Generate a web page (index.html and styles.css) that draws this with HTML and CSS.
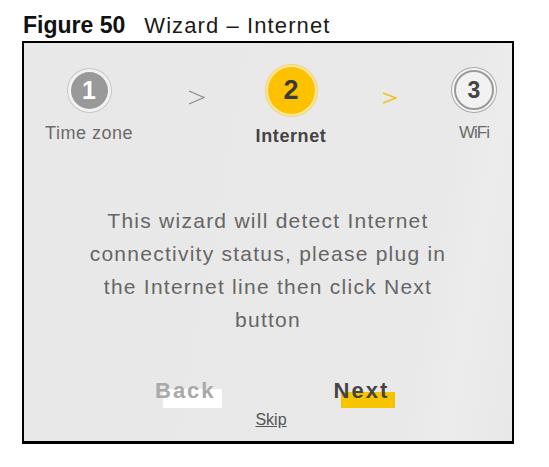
FILE: index.html
```html
<!DOCTYPE html>
<html>
<head>
<meta charset="utf-8">
<link rel="stylesheet" href="styles.css">
</head>
<body>
<div class="caption"><span class="fig">Figure 50</span><span class="cap-title">Wizard – Internet</span></div>
<div class="frame">
  <div class="steps">
    <div class="step step-1">
      <div class="dot-wrap"><div class="dot dot-done">1</div></div>
      <div class="label">Time zone</div>
    </div>
    <svg class="arrow arrow-gray" width="17" height="15" viewBox="0 0 17 15"><polyline points="1,1 16,7.5 1,14" fill="none" stroke="#8c8c8c" stroke-width="1.3"/></svg>
    <div class="step step-2">
      <div class="dot-wrap"><div class="dot dot-active">2</div></div>
      <div class="label label-active">Internet</div>
    </div>
    <svg class="arrow arrow-yellow" width="15" height="12" viewBox="0 0 15 12"><polyline points="1,1 14,6 1,11" fill="none" stroke="#f5c21b" stroke-width="1.6"/></svg>
    <div class="step step-3">
      <div class="dot-wrap"><div class="dot dot-next">3</div></div>
      <div class="label label-wifi">WiFi</div>
    </div>
  </div>
  <p class="message">This wizard will detect Internet<br>connectivity status, please plug in<br>the Internet line then click Next<br>button</p>
  <div class="buttons">
    <span class="btn btn-back">Back</span>
    <span class="btn btn-next">Next</span>
  </div>
  <div class="skip-row"><span class="skip">Skip</span></div>
</div>
</body>
</html>
```
FILE: styles.css
```css
html, body {
  margin: 0;
  padding: 0;
  background: #ffffff;
  font-family: "Liberation Sans", Arial, sans-serif;
}

.caption {
  margin-top: 12px;
  height: 26px;
  line-height: 26px;
  font-size: 22px;
  padding-left: 23px;
  color: #111;
  white-space: nowrap;
}

.fig {
  font-weight: bold;
  font-size: 23px;
}

.cap-title {
  margin-left: 19px;
  letter-spacing: 1.1px;
  color: #1a1a1a;
}

.frame {
  box-sizing: border-box;
  margin-top: 3px;
  margin-left: 22px;
  width: 492px;
  height: 403px;
  border: 2px solid #000;
  border-bottom-width: 3px;
  background: linear-gradient(100deg, #e8e8e8 0%, #e9e9e9 80%, #ececec 88%, #e8e8e8 100%);
  padding: 20px 0 0 0;
}

.steps {
  display: flex;
  align-items: flex-start;
  padding-left: 20px;
}

.step {
  display: flex;
  flex-direction: column;
  align-items: center;
}

.step-1 { width: 90px; }
.step-2 { width: 76px; margin-left: 48px; }
.step-3 { width: 48px; margin-left: 53px; }

.dot-wrap {
  height: 54px;
  display: flex;
  align-items: center;
  justify-content: center;
}

.dot {
  border-radius: 50%;
  display: flex;
  align-items: center;
  justify-content: center;
  font-weight: bold;
  box-sizing: border-box;
}

.dot-done {
  width: 37px;
  height: 37px;
  background: #999999;
  color: #ffffff;
  font-size: 25px;
  box-shadow: 0 0 0 3px #f3f3f3, 0 0 0 4px #c6c6c6;
}

.dot-active {
  width: 47px;
  height: 47px;
  background: #fcc200;
  color: #3a3a3a;
  font-size: 27px;
  box-shadow: 0 0 0 2px #fbe6a0, 0 0 0 3px #f2d470;
}

.dot-next {
  width: 40px;
  height: 40px;
  background: #f2f2f2;
  border: 2px solid #9a9a9a;
  color: #444444;
  font-size: 23px;
  box-shadow: 0 0 0 2px #f6f6f6, 0 0 0 3px #a9a9a9;
}

.label {
  margin-top: 5px;
  line-height: 22px;
  font-size: 18px;
  color: #6a6a6a;
  white-space: nowrap;
  letter-spacing: 0.5px;
}

.label-active {
  margin-top: 8px;
  font-weight: bold;
  color: #444444;
  letter-spacing: 0.6px;
}

.label-wifi {
  letter-spacing: -1px;
  font-size: 17px;
}

.arrow {
  flex: none;
  display: block;
}

.arrow-gray {
  margin-left: 54px;
  margin-top: 27px;
}

.arrow-yellow {
  margin-left: 53px;
  margin-top: 29px;
}

.message {
  margin: 57px 0 0 0;
  text-align: center;
  font-size: 21px;
  line-height: 33px;
  letter-spacing: 1.25px;
  color: #666666;
  white-space: nowrap;
}

.buttons {
  display: flex;
  margin-top: 42px;
  padding-left: 131px;
  height: 26px;
  line-height: 26px;
}

.btn {
  position: relative;
  font-size: 22px;
  font-weight: bold;
  letter-spacing: 2px;
  z-index: 0;
}

.btn::before {
  content: "";
  position: absolute;
  z-index: -1;
}

.btn-back {
  color: #a9a9a9;
}

.btn-back::before {
  left: 8px;
  top: 11px;
  width: 59px;
  height: 19px;
  background: #ffffff;
}

.btn-next {
  margin-left: 118px;
  color: #444444;
}

.btn-next::before {
  left: 7px;
  top: 14px;
  width: 54px;
  height: 16px;
  background: #f7c400;
}

.skip-row {
  margin-top: 6px;
  text-align: center;
  padding-left: 6px;
  line-height: 20px;
}

.skip {
  font-size: 16px;
  color: #555555;
  text-decoration: underline;
}
```
